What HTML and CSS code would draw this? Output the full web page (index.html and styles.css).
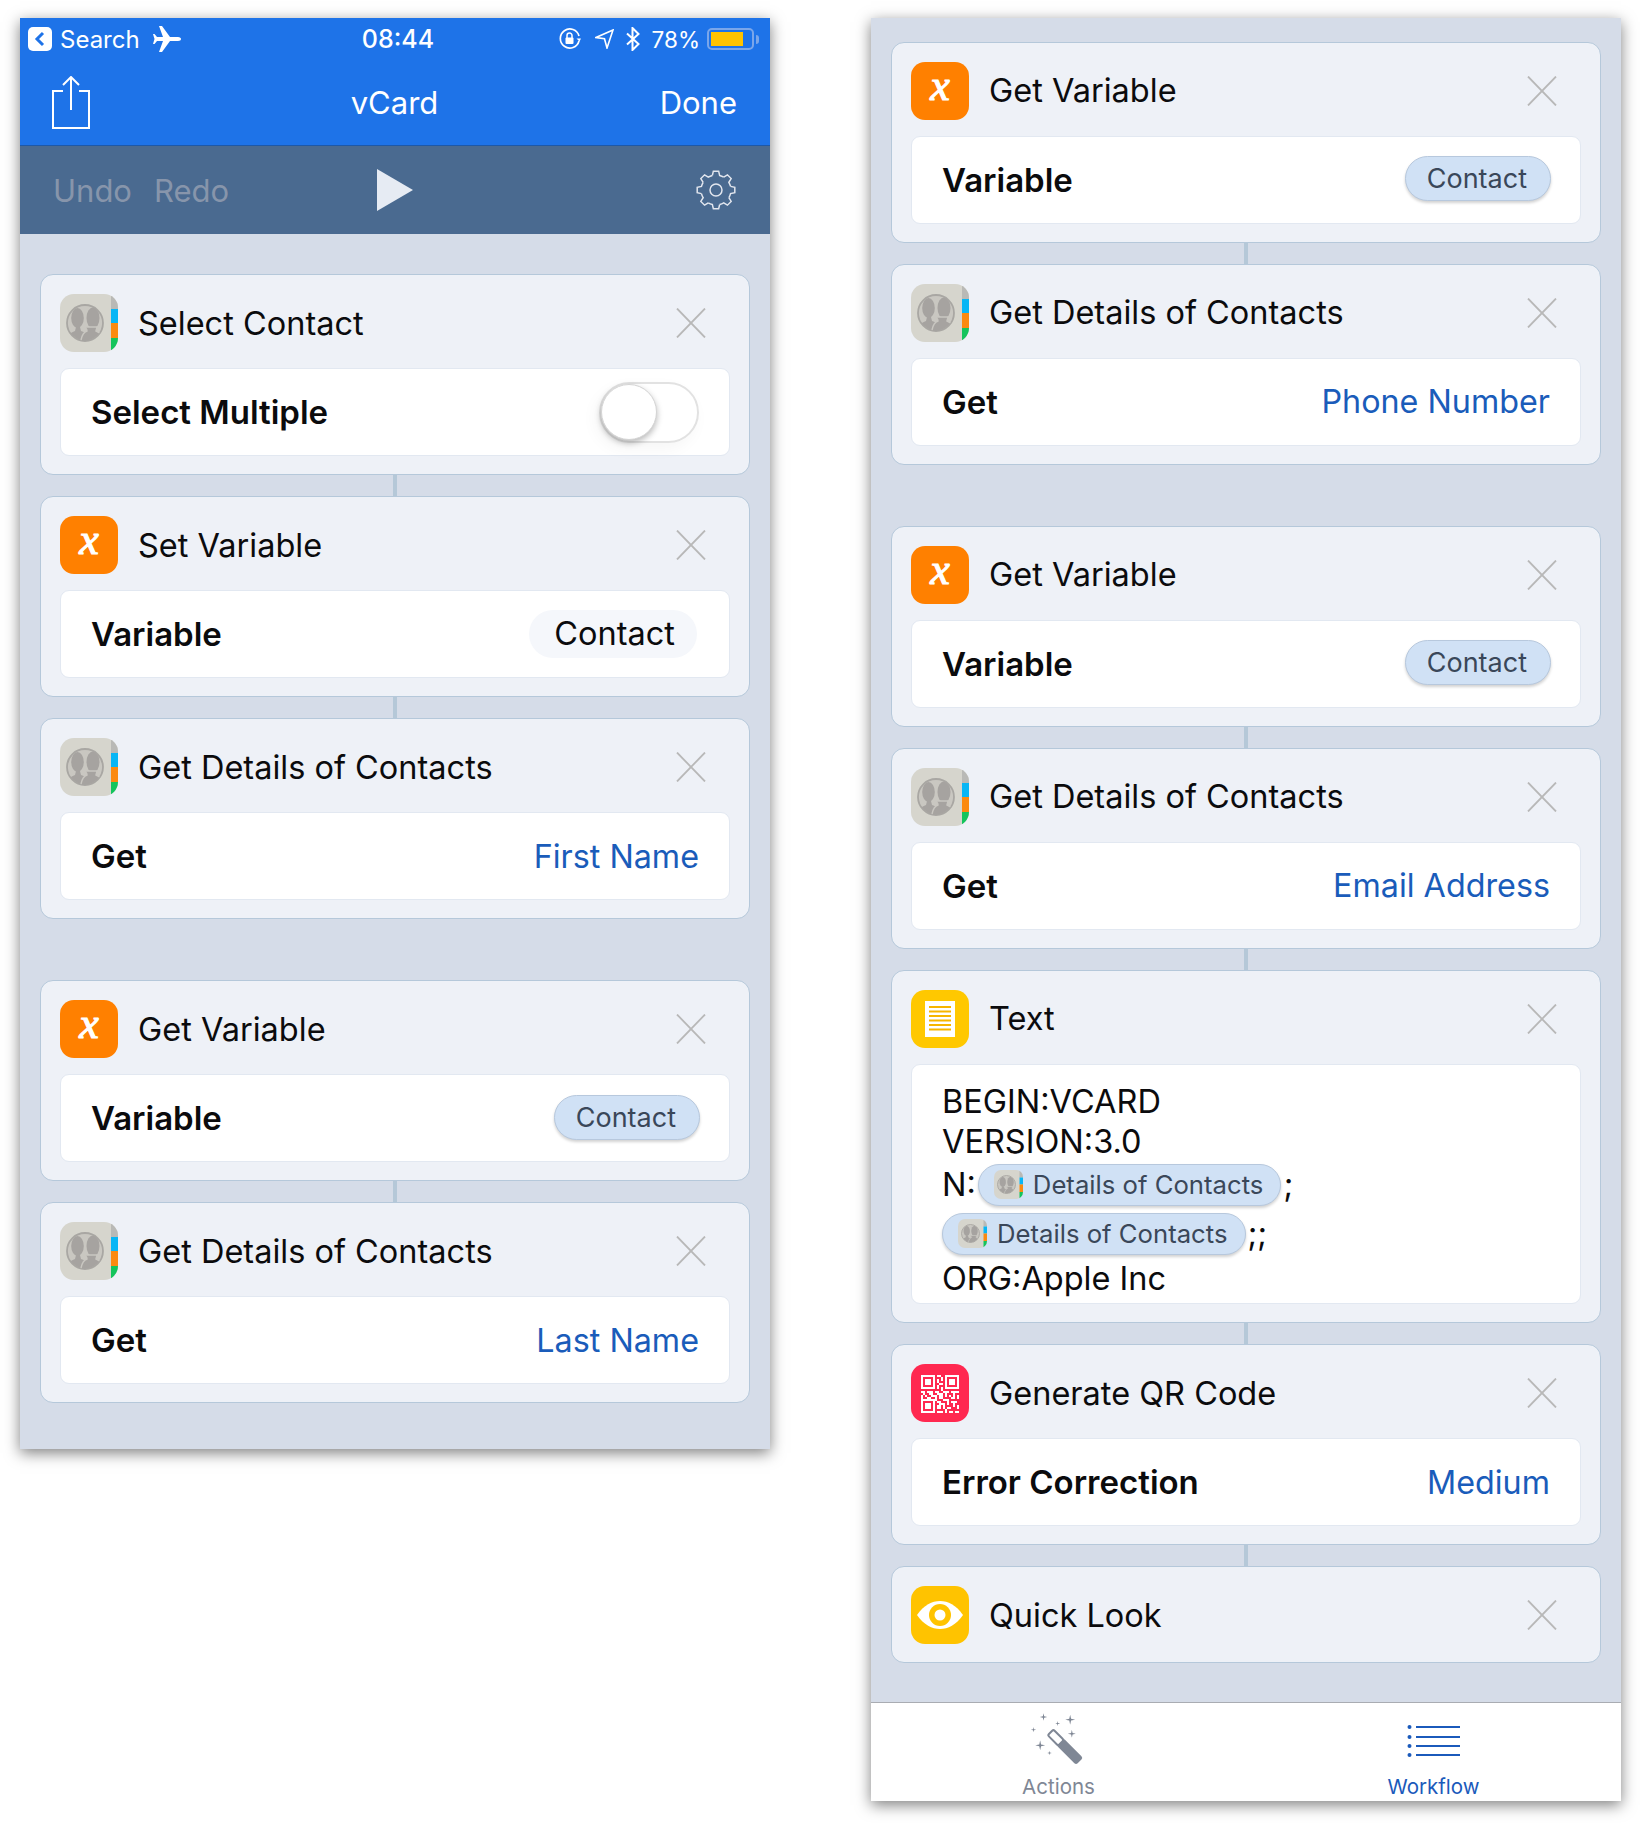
FILE: index.html
```html
<!DOCTYPE html>
<html lang="en">
<head>
  <meta charset="UTF-8" />
  <meta name="viewport" content="width=device-width, initial-scale=1.0"/>
  <title>vCard</title>
  <link rel="stylesheet" href="styles.css">
</head>
<body>
  <svg class="sprites" aria-hidden="true">
    <defs>
      <clipPath id="contacts-clip"><rect width="58" height="58" rx="14"/></clipPath>
      <clipPath id="contacts-face"><circle cx="25" cy="29" r="17.5"/></clipPath>
    </defs>
    <symbol id="contacts" viewBox="0 0 58 58">
      <g clip-path="url(#contacts-clip)">
        <rect width="58" height="58" fill="#d6d5cd"/>
        <rect x="51" width="7" height="15" fill="#b9b9b6"/>
        <rect x="51" y="15" width="7" height="14" fill="#08b6f5"/>
        <rect x="51" y="29" width="7" height="15" fill="#fb8a10"/>
        <rect x="51" y="44" width="7" height="14" fill="#14c45c"/>
        <circle cx="25" cy="29" r="18" fill="#c9c7c1" stroke="#a9a7a3" stroke-width="1.800"/>
        <g clip-path="url(#contacts-face)" fill="#a6a3a0">
          <ellipse cx="17.500" cy="24" rx="6.300" ry="10"/>
          <path d="M5 48c0-6 5-9 10-11l1-4h4l1 4c3 1 5 2 6 4l-2 9H5z"/>
          <ellipse cx="33" cy="24" rx="6.500" ry="10.500"/>
          <path d="M24 33c2 1 3 3 3 4-3 1-5 4-6 9l-1 4h26v-4c-1-5-6-7-10-9l1-4z" stroke="#c9c7c1" stroke-width="1.400"/>
        </g>
      </g>
    </symbol>
    <symbol id="close" viewBox="0 0 30 30">
      <path d="M1 0.5L29 29.5M29 0.5L1 29.5" stroke="#b8b8b8" stroke-width="1.8" fill="none"/>
    </symbol>
    <symbol id="doc" viewBox="0 0 58 58">
      <rect width="58" height="58" rx="14" fill="#ffc800"/>
      <rect x="14" y="11" width="30" height="36" fill="#fff"/>
      <path d="M18 17H40M18 21.500H40M18 26H40M18 30.500H40M18 35H40M18 39.500H40" stroke="#f7b500" stroke-width="2"/>
    </symbol>
    <symbol id="qr" viewBox="0 0 58 58">
      <rect width="58" height="58" rx="14" fill="#ff2850"/>
      <svg x="10" y="10" width="38" height="39" viewBox="0 0 19 19" shape-rendering="crispEdges">
        <path fill="#fff" fill-rule="evenodd" d="M0 0h7v7H0zM1 1v5h5V1zM2 2h3v3H2zM12 0h7v7h-7zM13 1v5h5V1zM14 2h3v3h-3zM0 12h7v7H0zM1 13v5h5v-5zM2 14h3v3H2z"/>
        <path fill="#fff" d="M8 0h2v1H8zM10 1h1v2h-1zM8 2h1v2H8zM9 4h2v1H9zM8 5h1v2H8zM10 6h1v2h-1zM0 8h2v1H0zM3 8h3v1H3zM7 8h2v1H7zM11 8h3v1h-3zM15 8h4v1h-4zM1 9h1v1H1zM4 9h2v1H4zM8 9h3v1H8zM12 9h1v2h-1zM16 9h1v2h-1zM0 10h1v2H0zM2 10h1v1H2zM5 10h3v1H5zM9 10h2v2H9zM14 10h1v1h-1zM18 10h1v2h-1zM3 11h2v1H3zM7 11h1v2H7zM11 12h3v1h-3zM15 11h2v1h-2zM8 13h2v1H8zM13 13h1v2h-1zM15 13h3v1h-3zM9 14h3v1H9zM16 14h1v2h-1zM8 15h2v2H8zM11 15h1v2h-1zM13 16h2v1h-2zM18 15h1v2h-1zM8 18h3v1H8zM12 17h1v2h-1zM14 18h2v1h-2zM17 18h2v1h-2z"/>
      </svg>
    </symbol>
    <symbol id="eye" viewBox="0 0 58 58">
      <rect width="58" height="58" rx="14" fill="#ffc300"/>
      <path d="M6 29C13 19 21 15 29 15s16 4 23 14c-7 10-15 14-23 14S13 39 6 29z" fill="#fff"/>
      <circle cx="29" cy="29" r="11" fill="#ffc300"/>
      <circle cx="29" cy="29" r="5.500" fill="#fff"/>
    </symbol>
    <symbol id="gear" viewBox="0 0 40 40">
      <g fill="none" stroke="#e2e6ee" stroke-width="1.500">
        <circle cx="20" cy="20" r="6"/>
        <path id="tooth" d="M16.370 5.450L17.360 1.200H22.640L23.630 5.450A15 15 0 0 1 27.730 7.140"/>
        <use href="#tooth" transform="rotate(45 20 20)"/>
        <use href="#tooth" transform="rotate(90 20 20)"/>
        <use href="#tooth" transform="rotate(135 20 20)"/>
        <use href="#tooth" transform="rotate(180 20 20)"/>
        <use href="#tooth" transform="rotate(225 20 20)"/>
        <use href="#tooth" transform="rotate(270 20 20)"/>
        <use href="#tooth" transform="rotate(315 20 20)"/>
      </g>
    </symbol>
    <symbol id="star" viewBox="-1 -1 2 2">
      <path d="M0-1L.18-.18 1 0 .18.18 0 1-.18.18-1 0-.18-.18z" fill="#7f8795"/>
    </symbol>
  </svg>

  <div class="phone phone-left">
    <header class="topbar">
      <div class="status">
        <div class="status-left">
          <span class="back">
            <svg width="24" height="24" viewBox="0 0 24 24"><path d="M15 6l-6 6 6 6" fill="none" stroke="#1e73e8" stroke-width="3"/></svg>
          </span>
          <span>Search</span>
          <svg class="plane" width="28" height="26" viewBox="0 0 28 26"><path fill="#fff" d="M28 13c0-1-1-2-3-2H17L9 0H6l4 11H4L1.500 8H0l1.500 5L0 18h1.500L4 15h6L6 26h3l8-11h8c2 0 3-1 3-2z"/></svg>
        </div>
        <div class="status-time">08:44</div>
        <div class="status-right">
          <svg class="status-lock" width="22" height="22" viewBox="0 0 22 22" fill="none"><path d="M20 13a9.500 9.500 0 1 1 0-5" stroke="#fff" stroke-width="1.700"/><path d="M17.500 10.500l3 3 1.500-3z" fill="#fff"/><rect x="6.500" y="9.500" width="8" height="6.500" rx="1" fill="#fff"/><path d="M8 10V7.500a2.500 2.500 0 0 1 5 0V10" stroke="#fff" stroke-width="1.500"/></svg>
          <svg width="19" height="20" viewBox="0 0 19 20" fill="none"><path d="M18 1L1 8.500l8.500 1.200L12 19z" stroke="#fff" stroke-width="1.600" stroke-linejoin="miter"/></svg>
          <svg width="14" height="24" viewBox="0 0 14 24" fill="none"><path d="M1 6.500L12.500 17 6.500 23V1l6 6L1 17.500" stroke="#fff" stroke-width="2"/></svg>
          <span class="status-pct">78%</span>
          <span class="battery"><span class="battery-fill"></span></span>
          <span class="battery-nub"></span>
        </div>
      </div>
      <div class="navrow">
        <svg class="share" width="38" height="53" viewBox="0 0 38 53" fill="none" stroke="#fff" stroke-width="2"><path d="M11 15H1v37h36V15H27"/><path d="M19 1v33M11 9l8-8 8 8"/></svg>
        <div class="nav-title">vCard</div>
        <div class="nav-done">Done</div>
      </div>
    </header>
    <div class="toolbar">
      <div class="undo-redo"><span>Undo</span><span>Redo</span></div>
      <svg width="36" height="42" viewBox="0 0 36 42"><path d="M0 0L36 21 0 42z" fill="#e6ebf3"/></svg>
      <svg class="gear" width="40" height="40"><use href="#gear"/></svg>
    </div>
    <main class="flow flow-left">
      <section class="card">
        <div class="card-head">
          <svg class="icon"><use href="#contacts"/></svg>
          <h2 class="card-title">Select Contact</h2>
          <svg class="close"><use href="#close"/></svg>
        </div>
        <div class="row">
          <span class="row-label">Select Multiple</span>
          <span class="toggle"><span class="knob"></span></span>
        </div>
      </section>
      <div class="link"></div>
      <section class="card">
        <div class="card-head">
          <div class="icon icon-var">x</div>
          <h2 class="card-title">Set Variable</h2>
          <svg class="close"><use href="#close"/></svg>
        </div>
        <div class="row">
          <span class="row-label">Variable</span>
          <span class="plain-pill">Contact</span>
        </div>
      </section>
      <div class="link"></div>
      <section class="card">
        <div class="card-head">
          <svg class="icon"><use href="#contacts"/></svg>
          <h2 class="card-title">Get Details of Contacts</h2>
          <svg class="close"><use href="#close"/></svg>
        </div>
        <div class="row">
          <span class="row-label">Get</span>
          <span class="row-value">First Name</span>
        </div>
      </section>
      <div class="spacer"></div>
      <section class="card">
        <div class="card-head">
          <div class="icon icon-var">x</div>
          <h2 class="card-title">Get Variable</h2>
          <svg class="close"><use href="#close"/></svg>
        </div>
        <div class="row">
          <span class="row-label">Variable</span>
          <span class="pill">Contact</span>
        </div>
      </section>
      <div class="link"></div>
      <section class="card">
        <div class="card-head">
          <svg class="icon"><use href="#contacts"/></svg>
          <h2 class="card-title">Get Details of Contacts</h2>
          <svg class="close"><use href="#close"/></svg>
        </div>
        <div class="row">
          <span class="row-label">Get</span>
          <span class="row-value">Last Name</span>
        </div>
      </section>
    </main>
  </div>

  <div class="phone phone-right">
    <main class="flow flow-right">
      <section class="card">
        <div class="card-head">
          <div class="icon icon-var">x</div>
          <h2 class="card-title">Get Variable</h2>
          <svg class="close"><use href="#close"/></svg>
        </div>
        <div class="row">
          <span class="row-label">Variable</span>
          <span class="pill">Contact</span>
        </div>
      </section>
      <div class="link"></div>
      <section class="card">
        <div class="card-head">
          <svg class="icon"><use href="#contacts"/></svg>
          <h2 class="card-title">Get Details of Contacts</h2>
          <svg class="close"><use href="#close"/></svg>
        </div>
        <div class="row">
          <span class="row-label">Get</span>
          <span class="row-value">Phone Number</span>
        </div>
      </section>
      <div class="spacer"></div>
      <section class="card">
        <div class="card-head">
          <div class="icon icon-var">x</div>
          <h2 class="card-title">Get Variable</h2>
          <svg class="close"><use href="#close"/></svg>
        </div>
        <div class="row">
          <span class="row-label">Variable</span>
          <span class="pill">Contact</span>
        </div>
      </section>
      <div class="link"></div>
      <section class="card">
        <div class="card-head">
          <svg class="icon"><use href="#contacts"/></svg>
          <h2 class="card-title">Get Details of Contacts</h2>
          <svg class="close"><use href="#close"/></svg>
        </div>
        <div class="row">
          <span class="row-label">Get</span>
          <span class="row-value">Email Address</span>
        </div>
      </section>
      <div class="link"></div>
      <section class="card">
        <div class="card-head">
          <svg class="icon"><use href="#doc"/></svg>
          <h2 class="card-title">Text</h2>
          <svg class="close"><use href="#close"/></svg>
        </div>
        <div class="text-row">
          <div class="text-line">BEGIN:VCARD</div>
          <div class="text-line">VERSION:3.0</div>
          <div class="text-line token-line">N:<span class="token"><svg class="token-icon"><use href="#contacts"/></svg>Details of Contacts</span>;</div>
          <div class="text-line token-line token-line-2"><span class="token"><svg class="token-icon"><use href="#contacts"/></svg>Details of Contacts</span>;;</div>
          <div class="text-line text-line-last">ORG:Apple Inc</div>
        </div>
      </section>
      <div class="link"></div>
      <section class="card">
        <div class="card-head">
          <svg class="icon"><use href="#qr"/></svg>
          <h2 class="card-title">Generate QR Code</h2>
          <svg class="close"><use href="#close"/></svg>
        </div>
        <div class="row">
          <span class="row-label">Error Correction</span>
          <span class="row-value">Medium</span>
        </div>
      </section>
      <div class="link"></div>
      <section class="card card-flat">
        <div class="card-head">
          <svg class="icon"><use href="#eye"/></svg>
          <h2 class="card-title">Quick Look</h2>
          <svg class="close"><use href="#close"/></svg>
        </div>
      </section>
    </main>
    <nav class="tabbar">
      <div class="tab">
        <div class="tab-icon">
          <svg width="57" height="56" viewBox="55 40 170 168">
            <use href="#star" x="160" y="45" width="30" height="30"/>
            <use href="#star" x="84" y="40" width="22" height="24"/>
            <use href="#star" x="168" y="90" width="24" height="24"/>
            <use href="#star" x="70" y="122" width="30" height="30"/>
            <use href="#star" x="57" y="82" width="16" height="16"/>
            <use href="#star" x="130" y="64" width="15" height="15"/>
            <use href="#star" x="106" y="153" width="14" height="14"/>
            <g transform="rotate(-45 165 147)">
              <rect x="153" y="78" width="24" height="44" rx="5" fill="none" stroke="#7f8795" stroke-width="6"/>
              <path d="M150 122h30v72q0 7-7 7h-16q-7 0-7-7z" fill="#7f8795"/>
            </g>
          </svg>
        </div>
        <span class="tab-label">Actions</span>
      </div>
      <div class="tab tab-active">
        <div class="tab-icon">
          <svg width="53" height="32" viewBox="0 0 53 32">
            <g fill="#1b5abb">
              <circle cx="2.500" cy="2" r="2"/><circle cx="2.500" cy="12" r="2"/><circle cx="2.500" cy="21" r="2"/><circle cx="2.500" cy="30" r="2"/>
              <rect x="9" y="1" width="44" height="2"/><rect x="9" y="11" width="44" height="2"/><rect x="9" y="20" width="44" height="2"/><rect x="9" y="29" width="44" height="2"/>
            </g>
          </svg>
        </div>
        <span class="tab-label">Workflow</span>
      </div>
    </nav>
  </div>
</body>
</html>
```

FILE: styles.css
```css
* { margin: 0; padding: 0; box-sizing: border-box; }

:root {
  --bg: #d5dce8;
  --card: #eef1f7;
  --line: #b5c8da;
  --blue: #1e73e8;
  --link-blue: #1a5cba;
}

body {
  background: #fff;
  font-family: Inter, 'Noto Sans', sans-serif;
  color: #0b0b0d;
  display: flex;
  align-items: flex-start;
  gap: 101px;
  min-height: 100vh;
  padding: 18px 0 0 20px;
}

.sprites {
  position: absolute;
  width: 0;
  height: 0;
}

.phone {
  width: 750px;
  background: var(--bg);
  box-shadow: 0 4px 14px rgba(0, 0, 0, 0.5);
  display: flex;
  flex-direction: column;
}

.phone-left { height: 1431px; }
.phone-right { height: 1783px; }

/* top bars */

.topbar {
  background: var(--blue);
  color: #fff;
  height: 128px;
  border-bottom: 1px solid #1d58a8;
}

.status {
  height: 42px;
  display: grid;
  grid-template-columns: 1fr auto 1fr;
  align-items: center;
  font-size: 24px;
  padding: 0 11px 0 8px;
}

.status-left,
.status-right {
  display: flex;
  align-items: center;
}

.status-left { gap: 8px; }
.status-right { justify-content: flex-end; gap: 12px; }

.back {
  width: 24px;
  height: 24px;
  background: #fff;
  border-radius: 5px;
  display: flex;
}

.plane { margin-left: 5px; }

.status-time {
  font-weight: 500;
  font-size: 25px;
  margin-left: 9px;
}

.status-lock { margin-right: 2px; }
.status-pct { font-size: 22.5px; }

.battery {
  width: 47px;
  height: 22px;
  border: 2px solid #7aa6ea;
  border-radius: 5px;
  padding: 2px;
  margin-left: -5px;
  display: flex;
}

.battery-fill {
  width: 32px;
  background: #ffc300;
}

.battery-nub {
  width: 3px;
  height: 9px;
  background: #7aa6ea;
  border-radius: 0 3px 3px 0;
  margin-left: -10px;
}

.navrow {
  height: 85px;
  display: grid;
  grid-template-columns: 1fr auto 1fr;
  align-items: center;
  padding: 0 33px 0 32px;
  font-size: 31px;
}

.nav-done { text-align: right; }

.toolbar {
  height: 88px;
  background: #4a6a90;
  display: grid;
  grid-template-columns: 1fr auto 1fr;
  align-items: center;
  padding: 0 34px 0 33px;
}

.undo-redo {
  display: flex;
  gap: 22px;
  font-size: 31px;
  color: #8795ab;
}

.gear { justify-self: end; }

/* workflow cards */

.flow {
  flex: 1;
  display: flex;
  flex-direction: column;
  padding: 0 20px;
}

.flow-left { padding-top: 40px; }
.flow-right { padding-top: 23.7px; }

.card {
  background: var(--card);
  border: 1px solid var(--line);
  border-radius: 13px;
  padding: 19px 19px 18px;
}

.card-head {
  display: flex;
  align-items: center;
  height: 58px;
  margin-bottom: 16px;
}

.card-flat .card-head { margin-bottom: 0; }

.icon {
  width: 58px;
  height: 58px;
  flex: none;
}

.icon-var {
  background: #ff8000;
  border-radius: 14px;
  color: #fff;
  font: italic 44px/1 'Liberation Serif', serif;
  -webkit-text-stroke: 1.2px #fff;
  display: flex;
  align-items: center;
  justify-content: center;
  padding-bottom: 10px;
}

.card-title {
  flex: 1;
  margin-left: 20px;
  font-size: 32.5px;
  font-weight: 400;
}

.close {
  width: 30px;
  height: 30px;
  margin-right: 24px;
}

.row {
  height: 88px;
  background: #fff;
  border: 1px solid #e2e8f1;
  border-radius: 9px;
  padding: 0 30px;
  display: flex;
  align-items: center;
  justify-content: space-between;
}

.row-label {
  font-size: 33px;
  font-weight: 600;
}

.row-value {
  font-size: 32.3px;
  color: var(--link-blue);
}

.toggle {
  width: 100px;
  height: 61px;
  border: 2px solid #e2e2e2;
  border-radius: 31px;
  display: flex;
  align-items: center;
  box-shadow: -4px 6px 16px rgba(0, 0, 0, 0.04);
}

.knob {
  width: 56px;
  height: 56px;
  background: #fff;
  border-radius: 50%;
  border: 1px solid #d4d4d4;
  box-shadow: 0 3px 6px rgba(0, 0, 0, 0.28);
}

.plain-pill {
  height: 48px;
  padding: 0 22px 0 25px;
  margin-right: 2px;
  background: #f5f7fb;
  border-radius: 24px;
  font-size: 32.5px;
  line-height: 48px;
}

.pill {
  height: 45px;
  margin-bottom: 2px;
  margin-right: -1px;
  padding: 0 23px 0 21px;
  background: #d0e1f5;
  border: 1px solid #b7c8dd;
  border-radius: 23px;
  box-shadow: 0 2px 3px rgba(0, 0, 0, 0.18);
  font-size: 27px;
  line-height: 43px;
  color: #3a4759;
}

.text-row {
  height: 240px;
  background: #fff;
  border: 1px solid #e2e8f1;
  border-radius: 9px;
  padding: 17px 30px 0;
}

.text-line {
  font-size: 32.5px;
  line-height: 40px;
}

.token-line {
  display: flex;
  align-items: center;
  height: 42px;
  margin-top: 2px;
}

.token-line-2 { margin-top: 7px; }
.text-line-last { margin-top: 4px; }

.token {
  height: 42px;
  display: flex;
  align-items: center;
  margin: 0 2px;
  padding: 0 17px 0 15px;
  background: #d0e1f5;
  border: 1px solid #b7c8dd;
  border-radius: 21px;
  box-shadow: 0 2px 3px rgba(0, 0, 0, 0.18);
  font-size: 25.7px;
  color: #3a4759;
}

.token-line-2 .token { margin-left: 0; }

.token-icon {
  width: 29px;
  height: 29px;
  margin-right: 10px;
}

.link {
  width: 4px;
  height: 21.2px;
  background: #b5c8d8;
  align-self: center;
}

.spacer { height: 60.7px; }

/* tab bar */

.tabbar {
  height: 99px;
  background: #fff;
  border-top: 1px solid #a9acb2;
  display: flex;
}

.tab {
  flex: 1;
  display: flex;
  flex-direction: column;
  align-items: center;
  padding-top: 10px;
  color: #7f8795;
}

.tab-active { color: #1b5abb; }

.tab-icon {
  height: 56px;
  display: flex;
  align-items: center;
  margin-bottom: 6px;
}

.tab-label {
  font-size: 20.5px;
  line-height: 24px;
}
```
